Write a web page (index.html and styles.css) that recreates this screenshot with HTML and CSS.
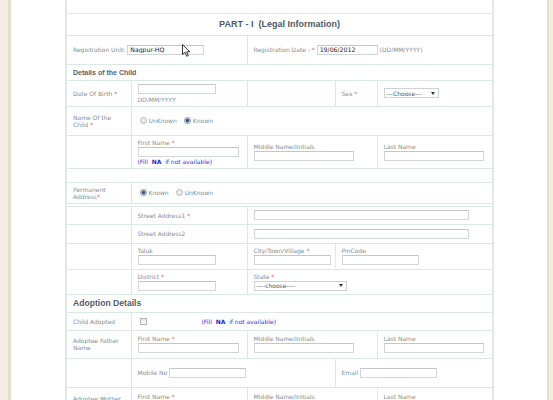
FILE: index.html
```html
<!DOCTYPE html>
<html>
<head>
<meta charset="utf-8">
<link rel="stylesheet" href="styles.css">
</head>
<body>
<div class="page">
  <table class="form">
    <colgroup>
      <col class="c1"><col class="c2"><col class="c3"><col class="c4"><col class="c5">
    </colgroup>
    <tr class="r-cut"><td colspan="5"></td></tr>
    <tr class="r-title"><td colspan="5" class="title">PART - I&nbsp; (Legal Information)</td></tr>
    <tr class="r-reg">
      <td colspan="2"><span class="lbl">Registration Unit:</span> <span class="reg-wrap"><input class="in w77 val" value="Nagpur-HQ"><svg class="cursor" width="9" height="13" viewBox="0 0 9 13"><path d="M0.5 0.5 L0.5 10.5 L3 8.3 L4.8 12.3 L6.3 11.6 L4.6 7.8 L7.8 7.8 Z" fill="#fff" stroke="#222" stroke-width="0.9" stroke-linejoin="round"/></svg></span></td>
      <td colspan="3"><span class="lbl">Registration Date : <span class="req">*</span></span> <input class="in w61 val" value="19/06/2012"> <span class="lbl">(DD/MM/YYYY)</span></td>
    </tr>
    <tr class="r-sec"><td colspan="5" class="sec">Details of the Child</td></tr>
    <tr class="r-dob">
      <td class="lbl">Date Of Birth <span class="req">*</span></td>
      <td><input class="in w78"><div class="hint">DD/MM/YYYY</div></td>
      <td></td>
      <td class="lbl">Sex <span class="req">*</span></td>
      <td><div class="sel w55"><span>---Choose---</span><span class="arr"></span></div></td>
    </tr>
    <tr class="r-name">
      <td class="lbl">Name Of the<br>Child <span class="req">*</span></td>
      <td colspan="4"><span class="opt"><span class="radio"></span>UnKnown</span><span class="opt"><span class="radio on"></span>Known</span></td>
    </tr>
    <tr class="r-fn">
      <td></td>
      <td><div class="lbl">First Name <span class="req">*</span></div><input class="in w101"><div class="fill">(Fill&nbsp;&nbsp;<b>NA</b>&nbsp;&nbsp;if not available)</div></td>
      <td colspan="2"><div class="lbl">Middle Name/Initials</div><input class="in w100"></td>
      <td><div class="lbl">Last Name</div><input class="in w100"></td>
    </tr>
    <tr class="r-empty"><td colspan="5"></td></tr>
    <tr class="r-perm">
      <td class="lbl">Permanent<br>Address<span class="req">*</span></td>
      <td colspan="4"><span class="opt"><span class="radio on"></span>Known</span><span class="opt"><span class="radio"></span>UnKnown</span></td>
    </tr>
    <tr class="r-thin"><td colspan="5"></td></tr>
    <tr class="r-st1">
      <td></td>
      <td class="lbl">Street Address1 <span class="req">*</span></td>
      <td colspan="3"><input class="in w215"></td>
    </tr>
    <tr class="r-st2">
      <td></td>
      <td class="lbl">Street Address2</td>
      <td colspan="3"><input class="in w215"></td>
    </tr>
    <tr class="r-taluk">
      <td></td>
      <td><div class="lbl">Taluk</div><input class="in w78"></td>
      <td><div class="lbl">City/Town/Village <span class="req">*</span></div><input class="in w77"></td>
      <td colspan="2"><div class="lbl">PinCode</div><input class="in w77"></td>
    </tr>
    <tr class="r-dist">
      <td></td>
      <td><div class="lbl">District <span class="req">*</span></div><input class="in w78"></td>
      <td colspan="3"><div class="lbl">State <span class="req">*</span></div><div class="sel w93"><span>----choose----</span><span class="arr"></span></div></td>
    </tr>
    <tr class="r-adopt"><td colspan="5" class="sec big">Adoption Details</td></tr>
    <tr class="r-child">
      <td class="lbl">Child Adopted</td>
      <td colspan="4"><div class="adopt-line"><span class="check"></span><span class="fill">(Fill&nbsp;&nbsp;<b>NA</b>&nbsp;&nbsp;if not available)</span></div></td>
    </tr>
    <tr class="r-fa">
      <td class="lbl">Adoptee Father<br>Name</td>
      <td><div class="lbl">First Name <span class="req">*</span></div><input class="in w101"></td>
      <td colspan="2"><div class="lbl">Middle Name/Initials</div><input class="in w100"></td>
      <td><div class="lbl">Last Name</div><input class="in w100"></td>
    </tr>
    <tr class="r-mob">
      <td></td>
      <td colspan="2"><span class="lbl">Mobile No</span> <input class="in w77"></td>
      <td colspan="2"><span class="lbl">Email</span> <input class="in w77"></td>
    </tr>
    <tr class="r-mo">
      <td class="lbl">Adoptee Mother<br>Name</td>
      <td><div class="lbl">First Name <span class="req">*</span></div><input class="in w101"></td>
      <td colspan="2"><div class="lbl">Middle Name/Initials</div><input class="in w100"></td>
      <td><div class="lbl">Last Name</div><input class="in w100"></td>
    </tr>
  </table>
</div>
</body>
</html>
```

FILE: styles.css
```css
html, body {
  margin: 0;
  padding: 0;
  height: 100%;
  background: #f4ede4;
  overflow: hidden;
}
.page {
  margin-left: 8px;
  width: 536px;
  min-height: 100%;
  background: #ffffff;
  border-left: 3px solid #e9dcc9;
  border-right: 2px solid #e9dcc9;
}
.form {
  margin-left: 54px;
  width: 427px;
  table-layout: fixed;
  border-collapse: collapse;
  border-left: 2px solid #dfeae8;
  border-right: 2px solid #dfeae8;
  font-family: "DejaVu Sans", Verdana, sans-serif;
  font-size: 6px;
  line-height: 7px;
  color: #868c93;
}
.c1 { width: 65px; }
.c2 { width: 116px; }
.c3 { width: 88px; }
.c4 { width: 42px; }
.c5 { width: 116px; }
.form td {
  border: 1px solid #dbe8e6;
  padding: 0 0 0 6px;
  vertical-align: middle;
}
.form tr.r-cut td { border-top: none; }
.r-cut { height: 13px; }
.r-title { height: 22px; }
.r-reg { height: 29px; }
.r-sec { height: 16px; }
.r-dob { height: 26px; }
.r-name { height: 29px; }
.r-fn { height: 33px; }
.r-empty { height: 14px; }
.r-perm { height: 21px; }
.r-thin { height: 3px; }
.r-st1 { height: 18px; }
.r-st2 { height: 19px; }
.r-taluk { height: 26px; }
.r-dist { height: 25px; }
.r-adopt { height: 18px; }
.r-child { height: 18px; }
.r-fa { height: 28px; }
.r-mob { height: 29px; }
.r-mo { height: 30px; }

.form td.title {
  text-align: center;
  padding: 0;
  font-family: "Liberation Sans", Arial, sans-serif;
  font-weight: bold;
  font-size: 9px;
  color: #4c5b69;
}
.form td.sec {
  font-family: "Liberation Sans", Arial, sans-serif;
  font-weight: bold;
  font-size: 7px;
  color: #56636f;
}
.form td.sec.big {
  font-size: 8.6px;
  color: #4f5d6a;
}
.lbl { color: #868c93; }
.req { color: #e8454a; }
.in {
  box-sizing: border-box;
  height: 10px;
  margin: 0;
  padding: 0 2px;
  border: 1px solid #d3d6d8;
  border-top-color: #c2c6c9;
  background: #fff;
  font-family: "DejaVu Sans", Verdana, sans-serif;
  font-size: 6px;
  color: #222;
  vertical-align: middle;
  display: inline-block;
}
.r-fn .in, .r-taluk .in, .r-dist .in, .r-fa .in, .r-mo .in, .r-dob .in { display: block; margin-top: 1px; }
.r-dob .in { margin-top: 0; }
.val { font-size: 6.2px; }
.w55 { width: 55px; }
.w61 { width: 61px; }
.w77 { width: 77px; }
.w78 { width: 78px; }
.w93 { width: 93px; }
.w100 { width: 100px; }
.w101 { width: 101px; }
.w215 { width: 215px; }
.reg-wrap {
  position: relative;
  display: inline-block;
  vertical-align: middle;
}
.cursor {
  position: absolute;
  left: 55px;
  top: -1px;
}
.hint {
  margin-top: 2px;
  font-style: italic;
  color: #868c93;
}
.sel {
  box-sizing: border-box;
  height: 10px;
  display: flex;
  align-items: center;
  justify-content: space-between;
  padding: 0 3px 0 2px;
  border: 1px solid #cfd2d5;
  background: #fff;
  color: #555;
  font-size: 6px;
}
.r-dist .sel { margin-top: 1px; }
.arr {
  width: 0;
  height: 0;
  border-left: 2px solid transparent;
  border-right: 2px solid transparent;
  border-top: 3px solid #333;
}
.opt {
  display: inline-flex;
  align-items: center;
  margin-right: 5px;
  color: #868c93;
}
.radio {
  box-sizing: border-box;
  width: 7px;
  height: 7px;
  margin: 0 2px 0 2px;
  border-radius: 50%;
  border: 1px solid #b9bcbf;
  background: radial-gradient(circle, #f4f4f4 0%, #dcdcdc 100%);
}
.radio.on {
  border-color: #8a96a3;
  background: radial-gradient(circle, #2a4f77 0%, #3a6690 45%, #c9d3dc 60%, #e8ecef 100%);
}
.fill {
  margin-top: 1px;
  color: #3030e0;
}
.fill b { color: #1e1ec8; }
.adopt-line {
  display: flex;
  align-items: center;
}
.check {
  box-sizing: border-box;
  width: 7px;
  height: 7px;
  margin-left: 2px;
  border: 1px solid #b3b6b9;
  background: linear-gradient(#e6e6e6, #f8f8f8);
}
.adopt-line .fill {
  margin: 0 0 0 55px;
}
```
